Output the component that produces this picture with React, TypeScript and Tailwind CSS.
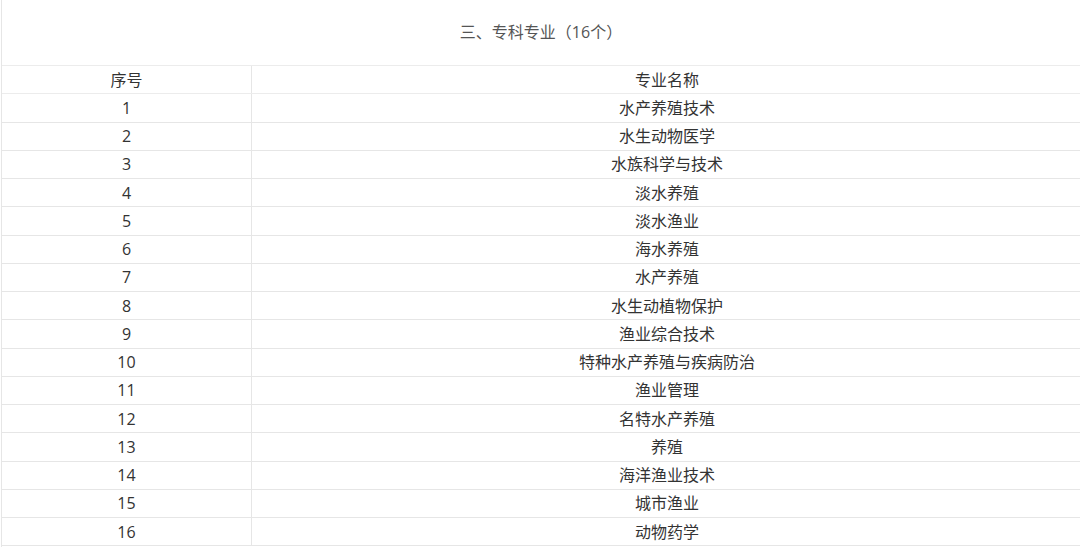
import React from "react";

const rows = [
  "水产养殖技术",
  "水生动物医学",
  "水族科学与技术",
  "淡水养殖",
  "淡水渔业",
  "海水养殖",
  "水产养殖",
  "水生动植物保护",
  "渔业综合技术",
  "特种水产养殖与疾病防治",
  "渔业管理",
  "名特水产养殖",
  "养殖",
  "海洋渔业技术",
  "城市渔业",
  "动物药学",
];

const font = { fontFamily: '"Open Sans", "Noto Sans CJK SC", sans-serif' };

export default function App() {
  return (
    <div className="w-[1080px] h-[547px] bg-white overflow-hidden" style={font}>
      <div className="ml-px border-l border-[#e6e6e6] h-full">
        <div className="h-[65px] flex items-center justify-center pb-[2px] text-[16px] text-[#555]">
          三、专科专业（16个）
        </div>
        <div className="border-t border-[#ececec] w-[1080px]">
          <div className="flex h-[28.25px] border-b border-[#ececec] text-[16px] text-[#333]">
            <div className="w-[250px] border-r border-[#e6e6e6] flex items-center justify-center">序号</div>
            <div className="flex-1 flex items-center justify-center">专业名称</div>
          </div>
          {rows.map((r, i) => (
            <div key={i} className="flex h-[28.25px] border-b border-[#e6e6e6] text-[16px] text-[#333]">
              <div className="w-[250px] border-r border-[#e6e6e6] flex items-center justify-center">{i + 1}</div>
              <div className="flex-1 flex items-center justify-center">{r}</div>
            </div>
          ))}
        </div>
      </div>
    </div>
  );
}
